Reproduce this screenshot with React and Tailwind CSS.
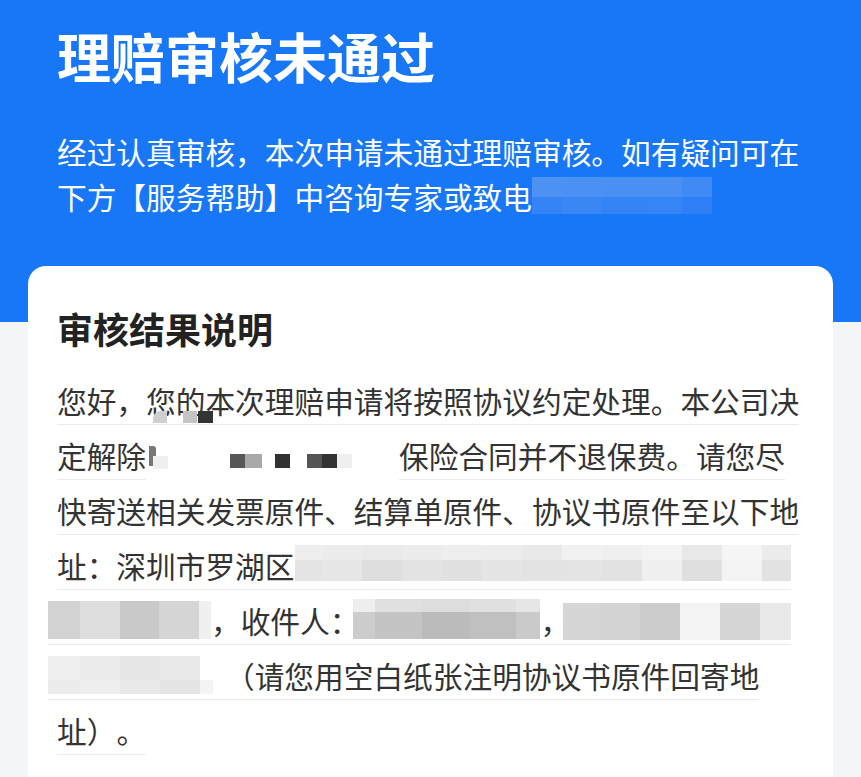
import React from "react";

const FONT = { fontFamily: '"Noto Sans CJK SC", "Noto Sans", sans-serif' };

function Mosaic({ cols, rows, colors, className = "" }) {
  return (
    <div className={"flex flex-col shrink-0 " + className}>
      {rows.map((h, r) => (
        <div key={r} className="flex">
          {cols.map((w, c) => (
            <div key={c} style={{ width: w, height: h, background: colors[r][c] }} />
          ))}
        </div>
      ))}
    </div>
  );
}

const Line = ({ children, className = "" }) => (
  <div className={"flex w-fit items-start h-[44px] border-b border-[#e8ecf2] " + className}>{children}</div>
);

const T = ({ children, className = "" }) => (
  <span className={"leading-[40px] whitespace-nowrap " + className}>{children}</span>
);

export default function App() {
  return (
    <div className="min-h-[777px] bg-[#f4f5f7] overflow-hidden" style={FONT}>
      <div className="bg-[#1877f7] h-[322px] pl-[57px] pt-[24px] text-white">
        <div className="text-[54px] leading-[64px] font-bold">理赔审核未通过</div>
        <div className="mt-[41px] text-[29.7px] leading-[45px]">
          <div className="whitespace-nowrap">经过认真审核，本次申请未通过理赔审核。如有疑问可在</div>
          <div className="flex items-start whitespace-nowrap">
            <span>下方【服务帮助】中咨询专家或致电</span>
            <Mosaic
              className="mt-[3px]"
              cols={[30, 40, 40, 40, 30]}
              rows={[20, 17]}
              colors={[
                ["#4d92f3", "#4b91f3", "#4a90f2", "#4a90f2", "#3f8af4"],
                ["#3584f6", "#3a86f5", "#3584f6", "#3685f6", "#2f80f7"],
              ]}
            />
          </div>
        </div>
      </div>

      <div className="-mt-[56px] ml-[28px] w-[805px] min-h-[511px] bg-white rounded-t-[18px] pl-[29px] pt-[40px]">
        <div className="text-[36px] leading-[44px] font-bold text-[#222]">审核结果说明</div>
        <div className="mt-[31px] text-[29.7px] text-[#333] flex flex-col gap-[11px]">
          <Line>
            <T>您好，您的本次理赔申请将按照协议约定处理。本公司决</T>
          </Line>

          <div className="flex items-start h-[44px]">
            <T className="h-[44px] border-b border-[#e8ecf2]">定解除</T>
            <div className="relative w-[253px] h-[44px] bg-white shrink-0">
              <div className="absolute left-[3px] top-[10px] w-[7px] h-[20px] bg-[#555] opacity-80 rounded-r-[3px]" />
              <div className="absolute left-[7px] -top-[25px] w-[14px] h-[12px] rounded-tl-[8px] bg-[#cfcfcf]" />
              <div className="absolute left-[37px] -top-[25px] w-[14px] h-[12px] bg-[#c4c4c4]" />
              <div className="absolute left-[52px] -top-[25px] w-[15px] h-[12px] bg-[#333]" />
              <div className="absolute left-[7px] top-[20px] w-[15px] h-[13px] bg-[#f0f0f0]" />
              <div className="absolute left-[84px] top-[18px] w-[15px] h-[14px] bg-[#575757]" />
              <div className="absolute left-[99px] top-[18px] w-[17px] h-[14px] bg-[#a9a9a9]" />
              <div className="absolute left-[129px] top-[18px] w-[15px] h-[14px] bg-[#323232]" />
              <div className="absolute left-[161px] top-[18px] w-[15px] h-[14px] bg-[#555]" />
              <div className="absolute left-[176px] top-[18px] w-[15px] h-[14px] bg-[#333]" />
              <div className="absolute left-[191px] top-[18px] w-[15px] h-[14px] bg-[#efefef]" />
            </div>
            <T className="h-[44px] border-b border-[#e8ecf2]">保险合同并不退保费。请您尽</T>
          </div>

          <Line>
            <T>快寄送相关发票原件、结算单原件、协议书原件至以下地</T>
          </Line>

          <Line>
            <T>址：深圳市罗湖区</T>
            <Mosaic
              className="-mt-[1px]"
              cols={[27, 40, 40, 40, 40, 40, 40, 40, 40, 40, 40, 40, 29]}
              rows={[15, 21]}
              colors={[
                ["#eeeeee", "#ececec", "#eaeaea", "#ececec", "#eeeeee", "#ededed", "#e9e9e9", "#f1f1f1", "#efefef", "#f3f3f3", "#e8e8e8", "#f5f5f5", "#ebebeb"],
                ["#e4e4e4", "#e6e6e6", "#dedede", "#e3e3e3", "#e1e1e1", "#e5e5e5", "#e3e3e3", "#e4e4e4", "#e2e2e2", "#f0f0f0", "#dfdfdf", "#f3f3f3", "#e2e2e2"],
              ]}
            />
          </Line>

          <Line className="-ml-[9px]">
            <Mosaic
              cols={[32, 40, 39, 40, 12]}
              rows={[38]}
              colors={[["#d3d3d3", "#dedede", "#c9c9c9", "#d5d5d5", "#f0f0f0"]]}
            />
            <T className="-mr-[6px]">，收件人：</T>
            <Mosaic
              className="-mt-[2px]"
              cols={[22, 47, 47, 47, 24]}
              rows={[13, 27]}
              colors={[
                ["#eeeeee", "#e0e0e0", "#dddddd", "#e0e0e0", "#e6e6e6"],
                ["#cccccc", "#c4c4c4", "#bbbbbb", "#c0c0c0", "#cacaca"],
              ]}
            />
            <T className="-mr-[7px]">，</T>
            <Mosaic
              className="mt-[2px]"
              cols={[37, 40, 40, 40, 40, 31]}
              rows={[37]}
              colors={[["#d6d6d6", "#d3d3d3", "#cccccc", "#f3f3f3", "#d6d6d6", "#e8e8e8"]]}
            />
          </Line>

          <Line className="-ml-[9px]">
            <Mosaic
              cols={[32, 40, 40, 40, 13]}
              rows={[24, 14]}
              colors={[
                ["#efefef", "#ececec", "#e6e6e6", "#e9e9e9", "#ffffff"],
                ["#ececec", "#eeeeee", "#e8e8e8", "#e4e4e4", "#f4f4f4"],
              ]}
            />
            <T className="ml-[12px]">（请您用空白纸张注明协议书原件回寄地</T>
          </Line>

          <Line>
            <T>
              址<span className="inline-block w-[1em]">）</span>。
            </T>
          </Line>
        </div>
      </div>
    </div>
  );
}
